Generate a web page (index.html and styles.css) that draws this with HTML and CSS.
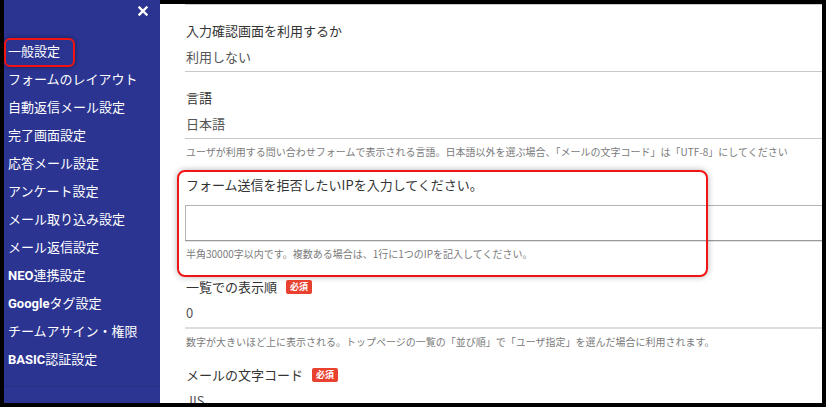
FILE: index.html
```html
<!DOCTYPE html>
<html lang="ja">
<head>
<meta charset="utf-8">
<title>一般設定</title>
<link rel="stylesheet" href="styles.css">
</head>
<body>
<div class="app">
  <nav class="sidebar">
    <div class="side-head">
      <svg class="close" width="10" height="10" viewBox="0 0 10 10" aria-label="閉じる"><path d="M1.5 1.5L8.5 8.5M8.5 1.5L1.5 8.5" stroke="#fff" stroke-width="2.4" stroke-linecap="square"/></svg>
    </div>
    <ul class="menu">
      <li class="menu-item is-marked">一般設定</li>
      <li class="menu-item">フォームのレイアウト</li>
      <li class="menu-item">自動返信メール設定</li>
      <li class="menu-item">完了画面設定</li>
      <li class="menu-item">応答メール設定</li>
      <li class="menu-item">アンケート設定</li>
      <li class="menu-item">メール取り込み設定</li>
      <li class="menu-item">メール返信設定</li>
      <li class="menu-item"><b class="latin">NEO</b>連携設定</li>
      <li class="menu-item"><b class="latin">Google</b>タグ設定</li>
      <li class="menu-item">チームアサイン・権限</li>
      <li class="menu-item"><b class="latin">BASIC</b>認証設定</li>
    </ul>
    <div class="side-foot"></div>
  </nav>
  <main class="content">
    <div class="form">
      <div class="field">
        <div class="label">入力確認画面を利用するか</div>
        <div class="value">利用しない</div>
      </div>
      <div class="field">
        <div class="label">言語</div>
        <div class="value">日本語</div>
        <div class="help">ユーザが利用する問い合わせフォームで表示される言語。日本語以外を選ぶ場合、「メールの文字コード」は「UTF-8」にしてください</div>
      </div>
      <div class="field is-marked">
        <div class="label">フォーム送信を拒否したいIPを入力してください。</div>
        <textarea class="textarea"></textarea>
        <div class="help">半角30000字以内です。複数ある場合は、1行に1つのIPを記入してください。</div>
      </div>
      <div class="field">
        <div class="label">一覧での表示順<span class="badge">必須</span></div>
        <div class="value value-input">0</div>
        <div class="help">数字が大きいほど上に表示される。トップページの一覧の「並び順」で「ユーザ指定」を選んだ場合に利用されます。</div>
      </div>
      <div class="field">
        <div class="label">メールの文字コード<span class="badge">必須</span></div>
        <div class="value">JIS</div>
      </div>
    </div>
  </main>
</div>
</body>
</html>
```

FILE: styles.css
```css
* { box-sizing: border-box; }

html, body {
  margin: 0;
  padding: 0;
  background: #000;
  overflow: hidden;
}

body {
  font-family: "Noto Sans CJK JP", "Noto Sans", sans-serif;
}

.app {
  display: flex;
  height: 403px;
  margin: 0 4px;
}

/* Sidebar */
.sidebar {
  width: 156px;
  flex: none;
  background: #2b3491;
  display: flex;
  flex-direction: column;
}

.side-head {
  height: 37px;
  display: flex;
  justify-content: flex-end;
  align-items: flex-start;
  padding: 6px 12px 0 0;
}

.close { display: block; }

.menu {
  list-style: none;
  margin: 0;
  padding: 0;
}

.menu-item {
  position: relative;
  height: 28px;
  line-height: 28px;
  padding-left: 4px;
  font-size: 13px;
  color: #fff;
  white-space: nowrap;
  letter-spacing: 0;
}

.latin {
  font-family: "Roboto", "Noto Sans", sans-serif;
  font-weight: 700;
  font-size: 13px;
}

.menu-item.is-marked::after {
  content: "";
  position: absolute;
  left: 0;
  top: 1px;
  width: 67px;
  height: 25px;
  border: 2px solid #f01414;
  border-radius: 6px;
  box-shadow: 0 0 4px rgba(0, 0, 0, 0.45);
}

.side-foot {
  margin-top: auto;
  height: 17px;
  border-top: 1px solid #26307f;
  background: #2c3592;
}

/* Content */
.content {
  flex: 1;
  background: #fff;
  border-top: 4px solid #000;
  overflow: hidden;
}

.form {
  margin-left: 25px;
  border-top: 1px solid #cccccc;
}

.field {
  position: relative;
  padding-top: 16px;
}

.label {
  font-size: 13px;
  line-height: 20px;
  color: #333;
  white-space: nowrap;
  display: flex;
  align-items: center;
  padding-left: 1px;
}

.value {
  margin-top: 6px;
  font-size: 13px;
  line-height: 20px;
  color: #555;
  padding: 0 0 4px 1px;
  border-bottom: 1px solid #c8c8c8;
}

.value-input {
  border-bottom: 2px solid #dedede;
}

.help {
  margin-top: 6px;
  font-size: 10px;
  line-height: 14px;
  color: #7a7a7a;
  white-space: nowrap;
  padding-left: 1px;
}

.textarea {
  display: block;
  width: 100%;
  height: 36px;
  margin: 10px 0 0 0;
  padding: 0;
  border: 1px solid #b4b4b4;
  border-right: none;
  border-bottom-color: #9a9a9a;
  box-shadow: 0 1px 0 #e2e2e2;
  resize: none;
  background: #fff;
  font: inherit;
}

.badge {
  display: inline-block;
  margin-left: 9px;
  height: 14px;
  line-height: 14px;
  padding: 0 4px;
  font-size: 9px;
  font-weight: 700;
  color: #fff;
  background: #e8412f;
  border-radius: 2px;
}

.field.is-marked::after {
  content: "";
  position: absolute;
  left: -8px;
  top: 11px;
  width: 527px;
  height: 103px;
  border: 2px solid #f01414;
  border-radius: 8px;
  box-shadow: 0 0 6px rgba(0, 0, 0, 0.3);
  pointer-events: none;
}
```
